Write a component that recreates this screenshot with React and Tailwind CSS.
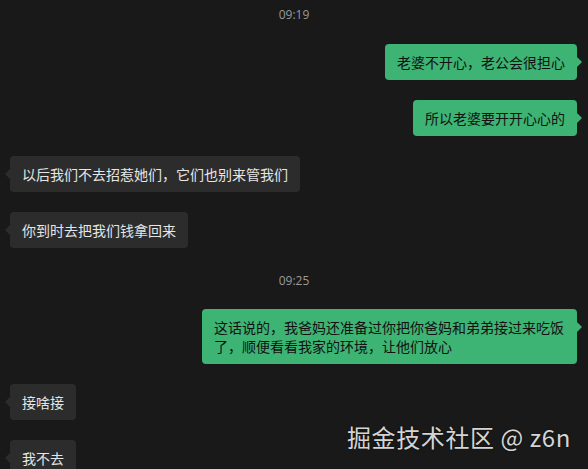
import React from "react"

const messages = [
    { type: "time", text: "09:19", first: true },
    { type: "me", text: "老婆不开心，老公会很担心" },
    { type: "me", text: "所以老婆要开开心心的" },
    { type: "other", text: "以后我们不去招惹她们，它们也别来管我们" },
    { type: "other", text: "你到时去把我们钱拿回来" },
    { type: "time", text: "09:25" },
    { type: "me", text: "这话说的，我爸妈还准备过你把你爸妈和弟弟接过来吃饭了，顺便看看我家的环境，让他们放心" },
    { type: "other", text: "接啥接" },
    { type: "other", text: "我不去" },
]

function TimeStamp({ text, first }) {
    return (
        <div className={`flex justify-center text-[12px] leading-5 text-[#9a9a9a] ${first ? "mt-[5px] mb-[19px]" : "mt-[3px] mb-[18px]"}`}
            style={{ fontFamily: '"Open Sans", "Liberation Sans", sans-serif' }}>
            {text}
        </div>
    )
}

function Bubble({ text, mine }) {
    return (
        <div className={`flex mb-5 ${mine ? "justify-end pr-[11px]" : "justify-start pl-[10px]"}`}>
            <div className={`relative max-w-[375px] rounded-[4px] px-3 py-[8.5px] text-[14px] leading-[19px] ${mine ? "bg-[#3db374] text-[#111]" : "bg-[#2c2c2c] text-[#e6e6e6]"}`}>
                {text}
                {/* little arrow */}
                {mine ? (
                    <span className="absolute top-[13px] -right-[5px] w-0 h-0 border-y-[5px] border-y-transparent border-l-[5px] border-l-[#3db374]" />
                ) : (
                    <span className="absolute top-[13px] -left-[5px] w-0 h-0 border-y-[5px] border-y-transparent border-r-[5px] border-r-[#2c2c2c]" />
                )}
            </div>
        </div>
    )
}

export default function App() {
    return (
        <div className="relative w-[588px] h-[469px] overflow-hidden bg-[#191919]"
            style={{ fontFamily: '"Noto Sans CJK SC", "Noto Sans", sans-serif' }}>
            <div className="flex flex-col">
                {messages.map((m, i) =>
                    m.type === "time"
                        ? <TimeStamp key={i} text={m.text} first={m.first} />
                        : <Bubble key={i} text={m.text} mine={m.type === "me"} />
                )}
            </div>

            {/* watermark */}
            <div className="absolute right-[17px] top-[422px] text-[24px] leading-[30px] tracking-[0.6px] text-[#d4d4d4] [text-shadow:0_0_2px_rgba(0,0,0,0.6)]">
                掘金技术社区 @ z6n
            </div>
        </div>
    )
}
